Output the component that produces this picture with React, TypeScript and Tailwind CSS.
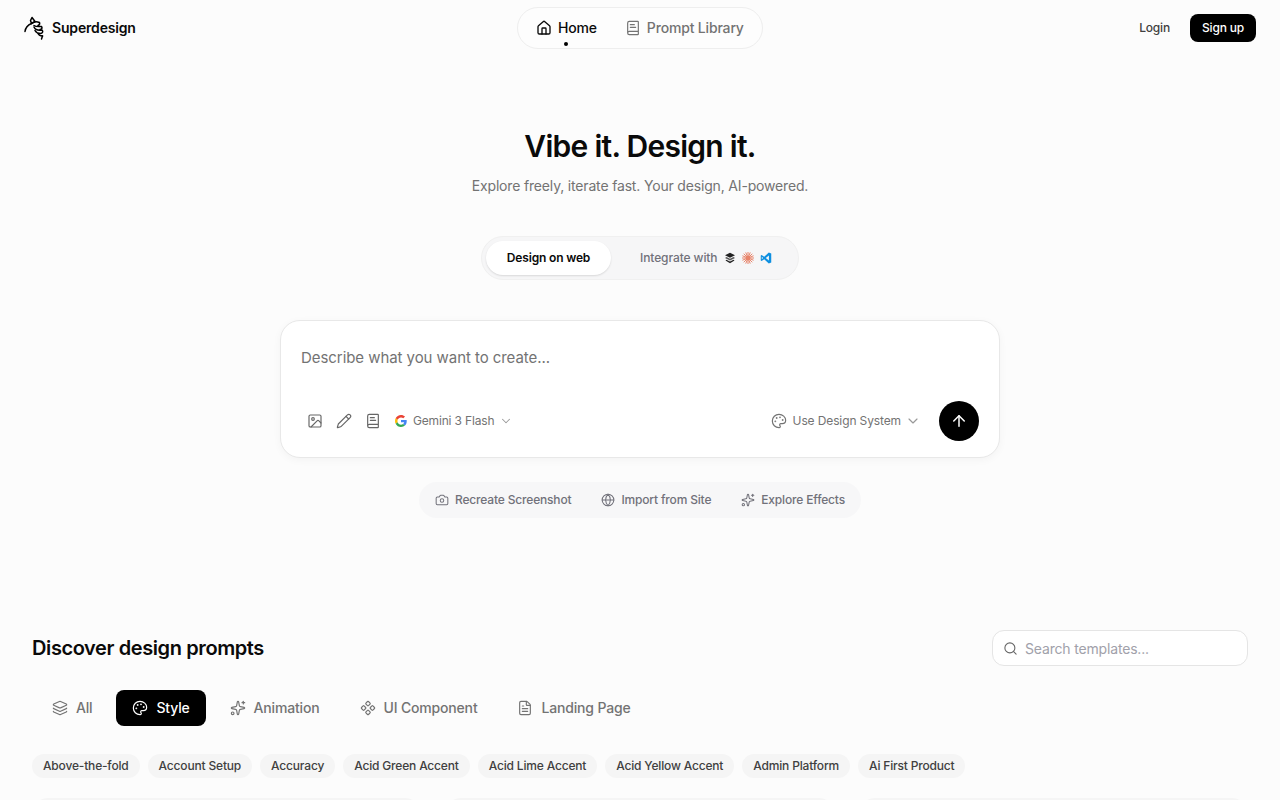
import React from 'react';
import { House, BookText, Image, Pencil, ChevronDown, Palette, ArrowUp, Camera, Globe, Sparkles, Search, Layers, Component, FileText } from 'lucide-react';

const Logo: React.FC = () => (
  <svg width="22" height="24" viewBox="0 0 22 24" fill="none" stroke="#000" strokeWidth="1.5" strokeLinecap="round" strokeLinejoin="round">
    <path d="M1 15.5C1.5 11.5 4 9 7.5 7.5" />
    <path d="M8 1.5L11 5.5L7.5 7.5L6.5 4.5Z" />
    <path d="M7.5 7.5C10 5.5 13 5.5 15.5 6.5C16 8 15.5 9 14 9.5" />
    <path d="M10 9.5C12 11 15.5 10.5 17.5 10.5C18.5 12 18 13 16 13.5" />
    <path d="M10 11C11 13.5 14 14.5 18 14C19.5 15.5 18.5 17.5 16.5 17.5C14 17.5 12 16.5 11 14.5" />
    <path d="M14 17.5C15 19.5 16.5 20 18.5 20" />
    <path d="M18.5 20L17.5 23" />
  </svg>
);

const GoogleIcon: React.FC = () => (
  <svg width="12" height="12" viewBox="0 0 48 48">
    <path fill="#EA4335" d="M24 9.5c3.5 0 6.7 1.2 9.2 3.6l6.9-6.9C35.9 2.4 30.5 0 24 0 14.6 0 6.5 5.4 2.6 13.2l8 6.2C12.5 13.6 17.800 9.500 24 9.500z" />
    <path fill="#4285F4" d="M46.900 24.500c0-1.600-.1-3.100-.4-4.500H24v9h12.900c-.6 3-2.200 5.500-4.700 7.200l7.700 6c4.500-4.200 7-10.300 7-17.700z" />
    <path fill="#FBBC05" d="M10.600 28.600c-.5-1.400-.8-3-.8-4.600s.3-3.200.8-4.600l-8-6.200C.9 16.500 0 20.100 0 24s.9 7.500 2.600 10.800l8-6.200z" />
    <path fill="#34A853" d="M24 48c6.500 0 11.900-2.100 15.900-5.800l-7.700-6c-2.200 1.400-4.900 2.300-8.200 2.300-6.200 0-11.500-4.100-13.400-9.900l-8 6.200C6.500 42.600 14.600 48 24 48z" />
  </svg>
);

const StackIcon: React.FC = () => (
  <svg width="12" height="12" viewBox="0 0 12 12" fill="#222">
    <path d="M6 .8L11 3.300L6 5.800L1 3.300Z" />
    <path d="M2.500 5L6 6.800L9.500 5L11 6L6 8.500L1 6Z" opacity="0.75" />
    <path d="M2.500 7.800L6 9.500L9.500 7.800L10.500 8.500L6 11.200L1.500 8.500Z" />
  </svg>
);

const BurstIcon: React.FC = () => (
  <svg width="12" height="12" viewBox="0 0 12 12" stroke="#e8846a" strokeWidth="1" strokeLinecap="round">
    <path d="M6 .4V11.600M.4 6H11.600M2 2L10 10M10 2L2 10M3.900 .8L8.100 11.200M8.100 .8L3.900 11.200M.8 3.900L11.200 8.100M11.200 3.900L.8 8.100" />
    <circle cx="6" cy="6" r="2.200" fill="#e8846a" stroke="none" />
  </svg>
);

const VSCodeIcon: React.FC = () => (
  <svg width="12" height="12" viewBox="0 0 24 24" fill="#0e8fe0">
    <path d="M17.600 1L8.400 9.700 3.400 5.900 1.500 6.900v10.200l1.900 1 5-3.800 9.200 8.700 4.900-2.100V3.100L17.600 1zm.2 6.200v9.600L11.500 12l6.300-4.800zM3.600 9.300L6.200 12l-2.600 2.700V9.300z" />
  </svg>
);

const categories = [
  { label: 'All', icon: Layers, className: 'mr-1 px-5 text-[#737373]' },
  { label: 'Style', icon: Palette, className: 'mr-1 bg-black px-4 text-white' },
  { label: 'Animation', icon: Sparkles, className: 'px-5 text-[#737373]' },
  { label: 'UI Component', icon: Component, className: 'px-5 text-[#737373]' },
  { label: 'Landing Page', icon: FileText, className: 'px-5 text-[#737373]' },
];

const tags = ['Above-the-fold', 'Account Setup', 'Accuracy', 'Acid Green Accent', 'Acid Lime Accent', 'Acid Yellow Accent', 'Admin Platform', 'Ai First Product'];

const quickActions = [
  { label: 'Recreate Screenshot', icon: Camera },
  { label: 'Import from Site', icon: Globe },
  { label: 'Explore Effects', icon: Sparkles },
];

export default function App() {
  return (
    <div className="h-[800px] overflow-hidden bg-[#fcfcfc] font-['Inter',sans-serif] tracking-[-0.17px] text-black antialiased">
      <header className="grid h-[56px] grid-cols-[1fr_auto_1fr] items-center px-6">
        <div className="flex items-center gap-[6px]">
          <Logo />
          <span className="text-sm font-semibold text-[#0a0a0a]">Superdesign</span>
        </div>
        <nav className="relative flex h-[42px] w-[246px] items-center rounded-full border border-[#eeeeee] bg-[#fdfdfd] pl-[18px]">
          <div className="flex items-center gap-[6px] text-sm font-medium text-[#0a0a0a]">
            <House className="h-4 w-4" strokeWidth={2} />
            Home
          </div>
          <span className="absolute bottom-[2px] left-[46px] h-1 w-1 rounded-full bg-black" />
          <div className="ml-[28px] flex items-center gap-[6px] text-sm font-medium text-[#737373]">
            <BookText className="h-4 w-4" strokeWidth={1.75} />
            Prompt Library
          </div>
        </nav>
        <div className="flex items-center justify-end gap-5">
          <span className="text-xs font-medium text-[#404040]">Login</span>
          <span className="flex h-7 w-[66px] items-center justify-center rounded-lg bg-black text-xs font-medium text-white">Sign up</span>
        </div>
      </header>

      <main className="flex flex-col items-center">
        <h1 className="mt-[70px] text-3xl leading-[40px] font-semibold tracking-[-0.72px] text-[#0a0a0a]">Vibe it. Design it.</h1>
        <p className="mt-[10px] text-sm leading-5 text-[#737373]">Explore freely, iterate fast. Your design, AI-powered.</p>

        <div className="mt-[40px] flex h-[44px] w-[318px] items-center rounded-full border border-[#f0f0f0] bg-[#f6f6f7] pl-[4px]">
          <div className="flex h-[34px] w-[125px] items-center justify-center rounded-full bg-white text-xs font-semibold text-[#0a0a0a] shadow-[0_1px_2px_rgba(0,0,0,0.12)]">Design on web</div>
          <div className="ml-[29px] flex items-center text-xs font-medium tracking-[-0.1px] text-[#71717a]">
            <span>Integrate with</span>
            <span className="ml-[7px] flex items-center gap-[6px]">
              <StackIcon />
              <BurstIcon />
              <VSCodeIcon />
            </span>
          </div>
        </div>

        <div className="mt-[40px] flex h-[138px] w-[720px] flex-col rounded-[20px] border border-[#e8e8e8] bg-white shadow-[0_2px_8px_rgba(0,0,0,0.04)]">
          <div className="pl-5 pt-[27px] text-[15px] leading-5 tracking-[-0.06px] text-[#737373]">Describe what you want to create...</div>
          <div className="mt-auto flex items-center justify-between pb-4 pl-[26px] pr-5">
            <div className="flex items-center text-[#666666]">
              <Image className="h-4 w-4" strokeWidth={1.75} />
              <Pencil className="ml-[13px] h-4 w-4" strokeWidth={1.75} />
              <BookText className="ml-[13px] h-4 w-4" strokeWidth={1.75} />
              <div className="ml-[14px] flex items-center gap-[6px] text-xs text-[#737373]">
                <GoogleIcon />
                <span>Gemini 3 Flash</span>
                <ChevronDown className="-ml-px h-[14px] w-[14px] text-[#999999]" strokeWidth={1.75} />
              </div>
            </div>
            <div className="flex items-center">
              <div className="flex items-center gap-[6px] text-xs tracking-[-0.12px] text-[#737373]">
                <Palette className="h-4 w-4" strokeWidth={1.75} />
                <span>Use Design System</span>
                <ChevronDown className="-ml-[2px] h-4 w-4 text-[#999999]" strokeWidth={1.75} />
              </div>
              <button className="ml-[18px] flex h-10 w-10 items-center justify-center rounded-full bg-black text-white">
                <ArrowUp className="h-[18px] w-[18px]" strokeWidth={2} />
              </button>
            </div>
          </div>
        </div>

        <div className="mt-6 flex h-9 items-center gap-[30px] rounded-full bg-[#f7f7f8] px-4">
          {quickActions.map(({ label, icon: Icon }) => (
            <div key={label} className="flex items-center gap-[6px] text-xs font-medium text-[#71717a]">
              <Icon className="h-[14px] w-[14px]" strokeWidth={1.75} />
              {label}
            </div>
          ))}
        </div>
      </main>

      <section className="mt-[112px] px-8">
        <div className="flex items-center justify-between">
          <h2 className="text-xl font-semibold tracking-[-0.4px] text-[#0a0a0a]">Discover design prompts</h2>
          <div className="flex h-9 w-[256px] items-center gap-[7px] rounded-xl border border-[#e5e5e5] bg-white pl-[10px]">
            <Search className="h-[15px] w-[15px] text-[#666666]" strokeWidth={1.75} />
            <span className="pt-[2px] text-sm text-[#a1a1aa]">Search templates...</span>
          </div>
        </div>

        <div className="mt-6 flex items-center">
          {categories.map(({ label, icon: Icon, className }) => (
            <div key={label} className={`flex h-9 items-center gap-2 rounded-lg text-sm font-medium ${className}`}>
              <Icon className="h-4 w-4" strokeWidth={1.75} />
              {label}
            </div>
          ))}
        </div>

        <div className="mt-[28px] flex items-center gap-2 tracking-[-0.175px]">
          {tags.map((tag) => (
            <span key={tag} className="flex h-6 items-center rounded-full bg-[#f5f5f5] px-[11px] text-xs font-medium text-[#404040]">{tag}</span>
          ))}
        </div>

        <div className="mt-[20px] grid grid-cols-3 gap-6">
          <div className="h-40 rounded-t-2xl bg-[#f5f5f5]" />
          <div className="h-40 rounded-t-2xl bg-[#f5f5f5]" />
          <div className="h-40 rounded-t-2xl bg-[#f5f5f5]" />
        </div>
      </section>
    </div>
  );
}
